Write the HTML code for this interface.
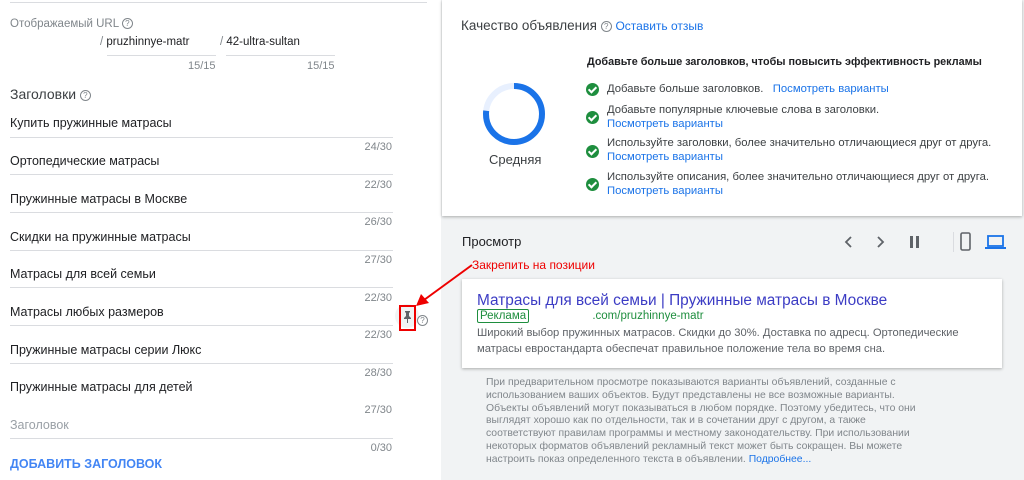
<!DOCTYPE html>
<html><head><meta charset="utf-8"><style>
*{margin:0;padding:0;box-sizing:border-box}
body{width:1024px;height:480px;overflow:hidden;font-family:"Liberation Sans",sans-serif;background:#f1f3f4;position:relative;color:#202124}
.a{position:absolute;white-space:nowrap}
#left{position:absolute;left:0;top:0;width:441px;height:480px;background:#fff}
.line{position:absolute;left:10px;width:383px;height:1px;background:#dadce0}
.row{position:absolute;left:10px;font-size:12.5px;color:#202124}
.cnt{position:absolute;right:49px;font-size:11px;color:#80868b}
.q{display:inline-block;width:11px;height:11px;border:1px solid #80868b;border-radius:50%;font-size:8px;line-height:9px;text-align:center;color:#80868b;vertical-align:middle}
.link{color:#1a73e8}
.ck{position:absolute;width:13px;height:13px;border-radius:50%;background:#1e8e3e}
.ck:after{content:"";position:absolute;left:4px;top:2px;width:3px;height:6px;border:solid #fff;border-width:0 2px 2px 0;transform:rotate(45deg)}
.t{font-size:11.3px;color:#3c4043;line-height:14px}
</style></head><body>
<div id="left">
<div class="line" style="top:2px;width:417px"></div>
<div class="a" style="left:10px;top:18px;font-size:11.5px;color:#80868b">Отображаемый URL <span class="q">?</span></div>
<div class="a" style="left:100px;top:36px;font-size:11.5px;color:#80868b">/ <span style="color:#202124">pruzhinnye-matr</span></div>
<div class="a" style="left:220px;top:36px;font-size:11.5px;color:#80868b">/ <span style="color:#202124">42-ultra-sultan</span></div>
<div style="position:absolute;left:107px;top:55px;width:109px;height:1px;background:#dadce0"></div>
<div style="position:absolute;left:226px;top:55px;width:109px;height:1px;background:#dadce0"></div>
<div class="a" style="left:188px;top:60px;font-size:11px;color:#80868b">15/15</div>
<div class="a" style="left:307px;top:60px;font-size:11px;color:#80868b">15/15</div>
<div class="a" style="left:10px;top:86px;font-size:14px;color:#3c4043">Заголовки <span class="q">?</span></div>

<div class="row a" style="top:116px">Купить пружинные матрасы</div>
<div class="line" style="top:137px"></div><div class="cnt a" style="top:141px">24/30</div>
<div class="row a" style="top:154px">Ортопедические матрасы</div>
<div class="line" style="top:174px"></div><div class="cnt a" style="top:179px">22/30</div>
<div class="row a" style="top:192px">Пружинные матрасы в Москве</div>
<div class="line" style="top:212px"></div><div class="cnt a" style="top:216px">26/30</div>
<div class="row a" style="top:230px">Скидки на пружинные матрасы</div>
<div class="line" style="top:250px"></div><div class="cnt a" style="top:254px">27/30</div>
<div class="row a" style="top:267px">Матрасы для всей семьи</div>
<div class="line" style="top:287px"></div><div class="cnt a" style="top:292px">22/30</div>
<div class="row a" style="top:305px">Матрасы любых размеров</div>
<div class="line" style="top:325px"></div><div class="cnt a" style="top:329px">22/30</div>
<div class="row a" style="top:343px">Пружинные матрасы серии Люкс</div>
<div class="line" style="top:363px"></div><div class="cnt a" style="top:367px">28/30</div>
<div class="row a" style="top:380px">Пружинные матрасы для детей</div>
<div class="cnt a" style="top:404px">27/30</div>
<div class="row a" style="top:418px;color:#9aa0a6">Заголовок</div>
<div class="line" style="top:438px"></div><div class="cnt a" style="top:442px">0/30</div>
<div class="a" style="left:10px;top:457px;font-size:12.5px;font-weight:bold;color:#4285f4">ДОБАВИТЬ ЗАГОЛОВОК</div>

<div style="position:absolute;left:395px;top:304px;width:24px;height:24px;border-radius:50%;background:#f1f3f4"></div>
<svg class="a" style="left:403px;top:310px" width="9" height="13" viewBox="0 0 9 13"><path d="M2 1h5v1l-1 1v3l2 2v1H5v4H4V9H1V8l2-2V3L2 2z" fill="#5f6368"/></svg>
<div style="position:absolute;left:399px;top:305px;width:17px;height:26px;border:2px solid #e00"></div>
<div class="a" style="left:417px;top:312px"><span class="q">?</span></div>
</div>

<div style="position:absolute;left:442px;top:0;width:580px;height:216px;background:#fff;box-shadow:0 1px 3px rgba(0,0,0,.3)"></div>
<div class="a" style="left:461px;top:18px;font-size:13.5px;color:#3c4043">Качество объявления <span class="q">?</span> <span class="link" style="font-size:12px">Оставить отзыв</span></div>
<svg class="a" style="left:482px;top:82px" width="64" height="64" viewBox="0 0 64 64"><circle cx="32" cy="32" r="28" fill="none" stroke="#e8f0fe" stroke-width="6"/><circle cx="32" cy="32" r="28" fill="none" stroke="#1a73e8" stroke-width="6" stroke-dasharray="135 176" transform="rotate(-90 32 32)"/></svg>
<div class="a" style="left:489px;top:152px;font-size:13px;color:#3c4043">Средняя</div>
<div class="a" style="left:587px;top:56px;font-size:10.8px;font-weight:bold;color:#202124">Добавьте больше заголовков, чтобы повысить эффективность рекламы</div>
<div class="ck" style="left:586px;top:83px"></div><div class="a t" style="left:607px;top:82px">Добавьте больше заголовков.&nbsp;&nbsp; <span class="link">Посмотреть варианты</span></div>
<div class="ck" style="left:586px;top:111px"></div><div class="a t" style="left:607px;top:103px">Добавьте популярные ключевые слова в заголовки.<br><span class="link">Посмотреть варианты</span></div>
<div class="ck" style="left:586px;top:145px"></div><div class="a t" style="left:607px;top:136px">Используйте заголовки, более значительно отличающиеся друг от друга.<br><span class="link">Посмотреть варианты</span></div>
<div class="ck" style="left:586px;top:178px"></div><div class="a t" style="left:607px;top:170px">Используйте описания, более значительно отличающиеся друг от друга.<br><span class="link">Посмотреть варианты</span></div>

<div class="a" style="left:462px;top:234px;font-size:13px;color:#202124">Просмотр</div>
<svg class="a" style="left:842px;top:232px" width="170" height="20" viewBox="0 0 170 20"><path d="M9 5l-5 5 5 5" fill="none" stroke="#5f6368" stroke-width="1.8"/><path d="M36 5l5 5-5 5" fill="none" stroke="#5f6368" stroke-width="1.8"/><rect x="68" y="4" width="3" height="12" fill="#5f6368"/><rect x="74" y="4" width="3" height="12" fill="#5f6368"/><rect x="111" y="-6" width="1" height="32" fill="#dadce0"/><rect x="119" y="1" width="9" height="17" rx="1.5" fill="none" stroke="#5f6368" stroke-width="1.6"/><rect x="146" y="4" width="15" height="10" fill="none" stroke="#1a73e8" stroke-width="1.8"/><rect x="143" y="15" width="21" height="2" fill="#1a73e8"/></svg>
<div class="a" style="left:472px;top:258px;font-size:12px;color:#e00">Закрепить на позиции</div>
<svg class="a" style="left:412px;top:262px" width="62" height="50" viewBox="0 0 62 50"><line x1="60" y1="3" x2="12" y2="38" stroke="#e00" stroke-width="2"/><path d="M4 44l5-12 8 9z" fill="#e00"/></svg>
<div style="position:absolute;left:462px;top:279px;width:540px;height:89px;background:#fff;box-shadow:0 1px 3px rgba(0,0,0,.3)"></div>
<div class="a" style="left:477px;top:292px;font-size:15.4px;color:#3c3cc4">Матрасы для всей семьи | Пружинные матрасы в Москве</div>
<div class="a" style="left:477px;top:310px;font-size:11.5px;color:#1e8e3e"><span style="border:1px solid #1e8e3e;border-radius:2px;padding:0 2px">Реклама</span> <span style="margin-left:60px">.com/pruzhinnye-matr</span></div>
<div class="a" style="left:477px;top:325px;font-size:11.2px;color:#5f6368;line-height:16px">Широкий выбор пружинных матрасов. Скидки до 30%. Доставка по адресц. Ортопедические<br>матрасы евростандарта обеспечат правильное положение тела во время сна.</div>
<div class="a" style="left:486px;top:377px;font-size:10.4px;color:#80868b;line-height:12.8px">При предварительном просмотре показываются варианты объявлений, созданные с<br>использованием ваших объектов. Будут представлены не все возможные варианты.<br>Объекты объявлений могут показываться в любом порядке. Поэтому убедитесь, что они<br>выглядят хорошо как по отдельности, так и в сочетании друг с другом, а также<br>соответствуют правилам программы и местному законодательству. При использовании<br>некоторых форматов объявлений рекламный текст может быть сокращен. Вы можете<br>настроить показ определенного текста в объявлении. <span class="link">Подробнее...</span></div>
</body></html>
